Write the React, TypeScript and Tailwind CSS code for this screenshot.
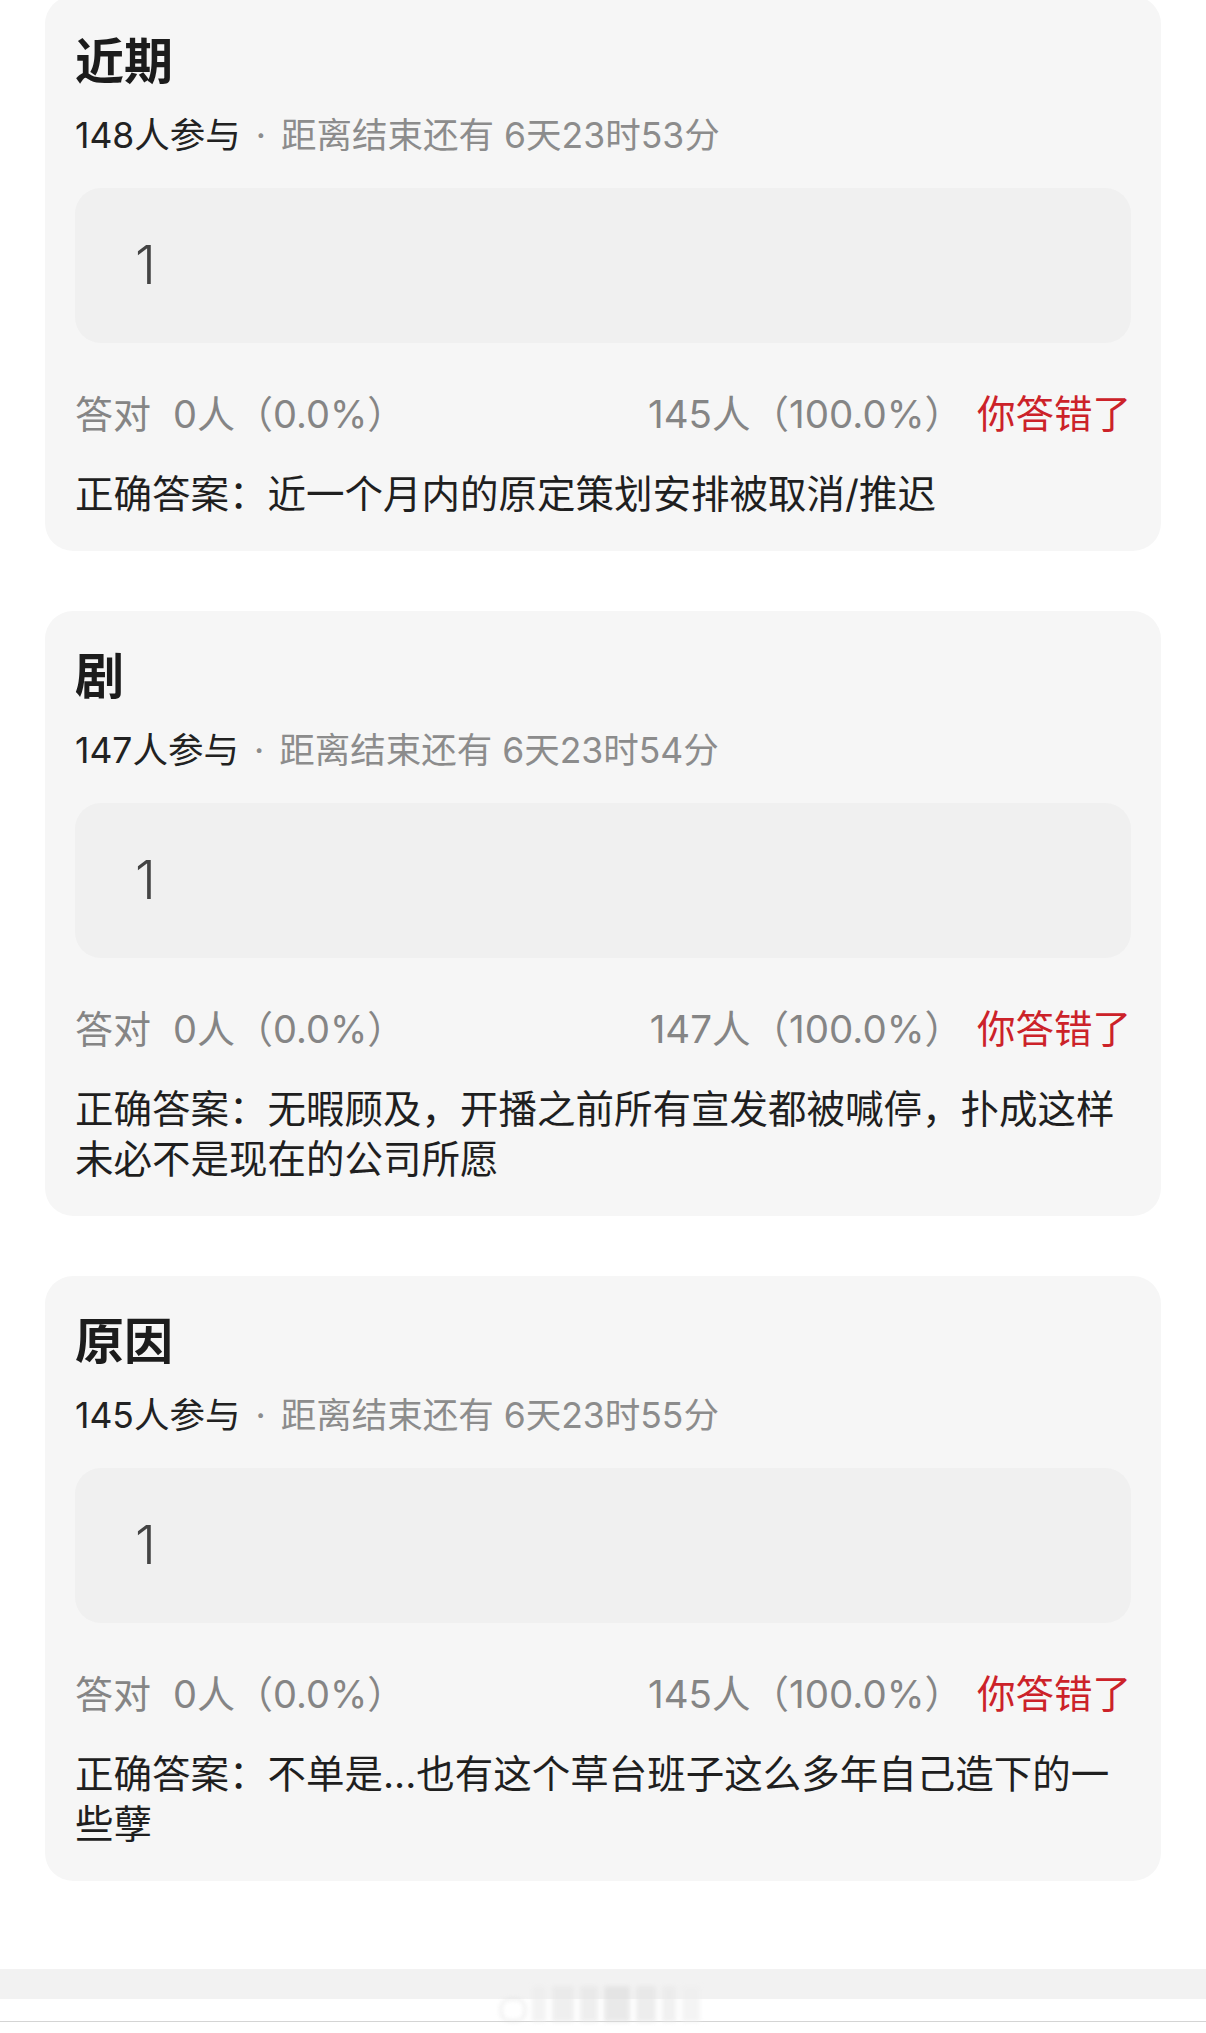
const FONT = { fontFamily: 'Inter, "Noto Sans CJK SC", sans-serif' };

type Quiz = {
  title: string;
  joined: string;
  remain: string;
  answer: string;
  correct: string;
  wrong: string;
  // the correct answer, split where the reference wraps it
  right: string[];
};

const quizzes: Quiz[] = [
  {
    title: "近期",
    joined: "148人参与",
    remain: "距离结束还有 6天23时53分",
    answer: "1",
    correct: "0人（0.0%）",
    wrong: "145人（100.0%）",
    right: ["正确答案：近一个月内的原定策划安排被取消/推迟"],
  },
  {
    title: "剧",
    joined: "147人参与",
    remain: "距离结束还有 6天23时54分",
    answer: "1",
    correct: "0人（0.0%）",
    wrong: "147人（100.0%）",
    right: ["正确答案：无暇顾及，开播之前所有宣发都被喊停，扑成这样", "未必不是现在的公司所愿"],
  },
  {
    title: "原因",
    joined: "145人参与",
    remain: "距离结束还有 6天23时55分",
    answer: "1",
    correct: "0人（0.0%）",
    wrong: "145人（100.0%）",
    right: ["正确答案：不单是...也有这个草台班子这么多年自己造下的一", "些孽"],
  },
];

function QuizCard({ quiz }: { quiz: Quiz }) {
  return (
    <div className="rounded-[28px] bg-[#f6f6f6] px-[30px] pt-[30px] pb-[32px]">
      <h2 className="text-[49px] leading-[72px] font-bold text-[#1c1c1c]">{quiz.title}</h2>
      <p className="mt-[15px] flex whitespace-nowrap text-[35.5px] leading-[46px] text-[#222]">
        <span>{quiz.joined}</span>
        <span className="mx-[15px] text-[#8c8c8c]">·</span>
        <span className="text-[#8c8c8c]">{quiz.remain}</span>
      </p>
      <div className="mt-[29px] flex h-[155px] items-center rounded-[26px] bg-[#f0f0f0] pl-[60px]">
        <span className="text-[53px] font-light text-[#444]">{quiz.answer}</span>
      </div>
      <div className="mt-[46px] flex items-center justify-between whitespace-nowrap text-[38px] leading-[50px]">
        <div className="flex text-[#858585]">
          <span>答对</span>
          <span className="ml-[22px]">{quiz.correct}</span>
        </div>
        <div className="flex text-[38.5px]">
          <span className="text-[#858585]">{quiz.wrong}</span>
          <span className="ml-[14px] text-[#cc2229]">你答错了</span>
        </div>
      </div>
      <div className="mt-[30px] text-[38.5px] leading-[50px] text-[#1f1f1f]">
        {quiz.right.map((line) => (
          <p key={line} className="whitespace-nowrap">
            {line}
          </p>
        ))}
      </div>
    </div>
  );
}

export default function App() {
  return (
    <div className="relative h-[2033px] w-[1206px] overflow-hidden bg-white" style={FONT}>
      <div className="-mt-[4px] flex flex-col gap-[60px] px-[45px]">
        {quizzes.map((q) => (
          <QuizCard key={q.title} quiz={q} />
        ))}
      </div>

      {/* bottom strip */}
      <div className="absolute inset-x-0 top-[1969px]">
        <div className="h-[30px] bg-[#f2f2f2]" />
        <div className="h-[22px] bg-white" />
        <div className="h-px bg-[#d4d4d4]" />
      </div>
      {/* faded toolbar ghost */}
      <div className="absolute left-[500px] top-[1983px] flex h-[39px] w-[203px] items-end gap-[6px] opacity-60 blur-[2px]">
        <div className="h-[24px] w-[26px] rounded-[10px] border-2 border-[#d8d8d8]" />
        <div className="h-[36px] w-[14px] bg-[#ececec]" />
        <div className="h-[36px] w-[22px] bg-[#e6e6e6]" />
        <div className="h-[36px] w-[18px] bg-[#e4e4e4]" />
        <div className="h-[36px] w-[26px] bg-[#dcdcdc]" />
        <div className="h-[36px] w-[20px] bg-[#e2e2e2]" />
        <div className="h-[36px] w-[14px] bg-[#e8e8e8]" />
        <div className="h-[36px] w-[18px] bg-[#eeeeee]" />
      </div>
    </div>
  );
}
